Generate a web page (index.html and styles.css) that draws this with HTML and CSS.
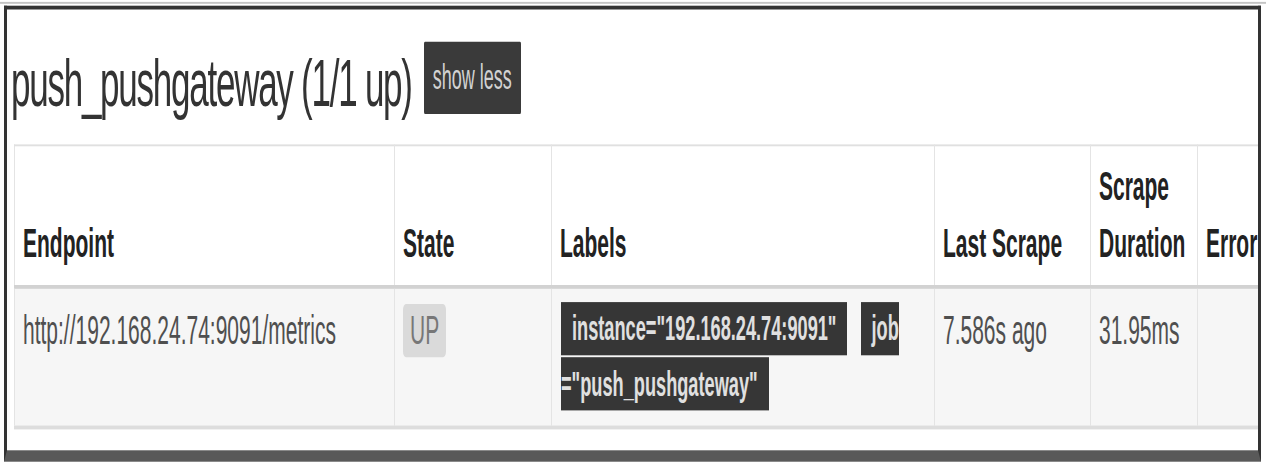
FILE: index.html
```html
<!DOCTYPE html>
<html>
<head>
<meta charset="utf-8">
<title>Targets</title>
<link rel="stylesheet" href="styles.css">
</head>
<body>
<div class="screen">
  <div class="topline"></div>
  <div class="frame">
    <div class="title-row">
      <h2 class="job-title">push_pushgateway (1/1 up)</h2>
      <button class="btn-toggle" type="button">show less</button>
    </div>
    <table class="targets">
      <colgroup>
        <col class="c-endpoint">
        <col class="c-state">
        <col class="c-labels">
        <col class="c-last">
        <col class="c-dur">
        <col class="c-error">
      </colgroup>
      <thead>
        <tr>
          <th>Endpoint</th>
          <th>State</th>
          <th>Labels</th>
          <th>Last Scrape</th>
          <th>Scrape Duration</th>
          <th>Error</th>
        </tr>
      </thead>
      <tbody>
        <tr>
          <td>http://192.168.24.74:9091/metrics</td>
          <td><span class="state-up">UP</span></td>
          <td class="labels-cell"><span class="lbl">instance="192.168.24.74:9091"</span> <span class="lbl">job<wbr>="push_pushgateway"</span></td>
          <td>7.586s ago</td>
          <td>31.95ms</td>
          <td></td>
        </tr>
      </tbody>
    </table>
  </div>
</div>
</body>
</html>
```

FILE: styles.css
```css
html {
  margin: 0;
  padding: 0;
  overflow: hidden;
  background: #ffffff;
}

body {
  margin: 0;
  padding: 0;
  height: 464px;
  font-family: "Liberation Sans", Arial, sans-serif;
  color: #555555;
}

/* The reference image is vertically stretched; lay out at natural size and stretch. */
.screen {
  width: 1266px;
  height: 244.2px;
  padding-top: 1px;
  box-sizing: border-box;
  transform: scaleY(1.9);
  transform-origin: 0 0;
}

.topline {
  height: 1.3px;
  background: #c4c4c4;
  margin-bottom: 0.3px;
}

.frame {
  margin: 0 5px 0 4px;
  border-top: 2.4px solid #333333;
  border-left: 3px solid #333333;
  border-right: 3px solid #333333;
  border-bottom: 6.3px solid #595959;
  padding-bottom: 10.6px;
  overflow: hidden;
}

.title-row {
  display: flex;
  align-items: flex-start;
  padding-left: 4px;
  height: 59.7px;
  margin-bottom: 11.9px;
}

.job-title {
  margin: 19px 0 0 0;
  font-size: 35px;
  letter-spacing: -1.25px;
  line-height: 40px;
  font-weight: normal;
  color: #333333;
  white-space: nowrap;
}

.btn-toggle {
  margin: 17.9px 0 0 12px;
  padding: 8px 9px 7.9px;
  border: 0;
  border-radius: 1px;
  background: #3a3a3a;
  color: #d2d2d2;
  font-family: "Liberation Sans", Arial, sans-serif;
  font-size: 18px;
  line-height: 22px;
}

.targets {
  margin-left: 7px;
  border-collapse: collapse;
  table-layout: fixed;
  width: 1303px;
}

.c-endpoint { width: 380px; }
.c-state { width: 157px; }
.c-labels { width: 383px; }
.c-last { width: 156px; }
.c-dur { width: 107px; }
.c-error { width: 120px; }

.targets th,
.targets td {
  text-align: left;
  font-size: 21px;
  line-height: 30px;
  border-left: 1px solid #e4e4e4;
  border-right: 1px solid #e4e4e4;
  white-space: normal;
}

.targets th {
  vertical-align: bottom;
  font-weight: bold;
  color: #222222;
  padding: 6px 9px 7px 8px;
  border-top: 1.5px solid #e0e0e0;
  border-bottom: 2.5px solid #d2d2d2;
}

.targets tbody tr {
  background: #f6f6f6;
}

.targets td {
  vertical-align: top;
  padding: 7px 9px 7px 8px;
  border-bottom: 2px solid #dddddd;
  color: #4f4f4f;
}

.state-up {
  display: inline-block;
  padding: 3px 7px;
  line-height: 21.4px;
  background: #dadada;
  color: #777777;
  border-radius: 3px;
}

.targets td.labels-cell {
  font-size: 18px;
  line-height: 29px;
  padding-left: 9px;
}

.lbl {
  background: #363636;
  color: #e0e0e0;
  font-weight: bold;
  font-size: 18.2px;
  padding: 4.2px 11px;
  margin-right: 8px;
}
```
